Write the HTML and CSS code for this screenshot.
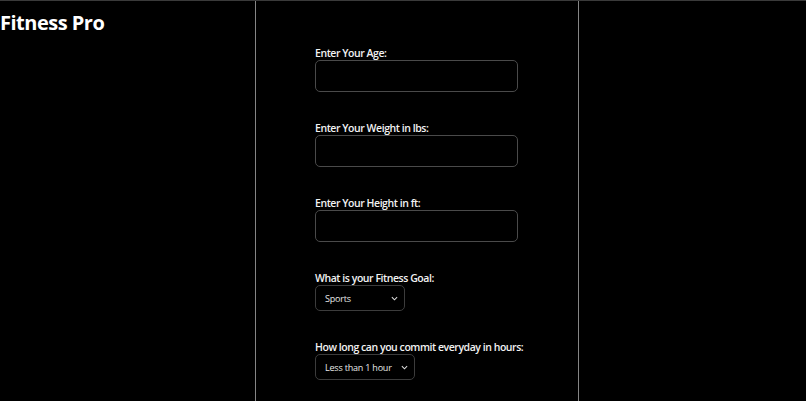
FILE: index.html
```html
<!DOCTYPE html>
<html>
<head>
<meta charset="utf-8">
<link rel="stylesheet" href="styles.css">
</head>
<body>
<div class="page">
  <header class="brand"><h1 class="title">Fitness Pro</h1></header>
  <main class="panel">
    <form class="form">
      <div class="field">
        <label class="label">Enter Your Age:</label>
        <input class="text-input" type="text">
      </div>
      <div class="field">
        <label class="label">Enter Your Weight in lbs:</label>
        <input class="text-input" type="text">
      </div>
      <div class="field">
        <label class="label">Enter Your Height in ft:</label>
        <input class="text-input" type="text">
      </div>
      <div class="field">
        <label class="label">What is your Fitness Goal:</label>
        <div class="select select-goal">
          <span class="select-text">Sports</span>
          <svg class="chevron" viewBox="0 0 8 5" width="7" height="5"><path d="M1 1 L4 4 L7 1" fill="none" stroke="#ddd" stroke-width="1.2"/></svg>
        </div>
      </div>
      <div class="field">
        <label class="label">How long can you commit everyday in hours:</label>
        <div class="select select-time">
          <span class="select-text">Less than 1 hour</span>
          <svg class="chevron" viewBox="0 0 8 5" width="7" height="5"><path d="M1 1 L4 4 L7 1" fill="none" stroke="#ddd" stroke-width="1.2"/></svg>
        </div>
      </div>
    </form>
  </main>
  <aside class="side"></aside>
</div>
</body>
</html>
```
FILE: styles.css
```css
html, body {
  margin: 0;
  padding: 0;
  background: #000;
  height: 100%;
  overflow: hidden;
}
body {
  font-family: "Open Sans", "Noto Sans", sans-serif;
  color: #fff;
}
.page {
  display: flex;
  height: 401px;
  border-top: 1px solid #3a3a3a;
  box-sizing: border-box;
}
.brand {
  width: 255px;
  flex: none;
}
.title {
  margin: 9px 0 0 0;
  font-size: 20px;
  font-weight: 700;
  line-height: 26px;
  letter-spacing: -0.5px;
}
.panel {
  width: 324px;
  flex: none;
  box-sizing: border-box;
  border-left: 1px solid #858585;
  border-right: 1px solid #858585;
  padding: 46px 0 0 59px;
}
.side { flex: 1; }
.form {
  display: flex;
  flex-direction: column;
  gap: 30px;
}
.field {
  display: flex;
  flex-direction: column;
  align-items: flex-start;
}
.label {
  font-size: 10.5px;
  font-weight: 600;
  line-height: 13px;
  letter-spacing: -0.45px;
  color: #f2f2f2;
}
.text-input {
  width: 203px;
  height: 32px;
  box-sizing: border-box;
  background: #000;
  border: 1.5px solid #4a4a4a;
  border-radius: 5px;
  margin: 0;
  outline: none;
}
.select {
  height: 26px;
  box-sizing: border-box;
  border: 1px solid #3c3c3c;
  border-radius: 5px;
  display: flex;
  align-items: center;
  justify-content: space-between;
  padding: 0 6px 0 9px;
  font-size: 9px;
  letter-spacing: -0.2px;
  color: #e8e8e8;
}
.select-goal { width: 90px; }
.select-time { width: 100px; }
.chevron { display: block; }
```
